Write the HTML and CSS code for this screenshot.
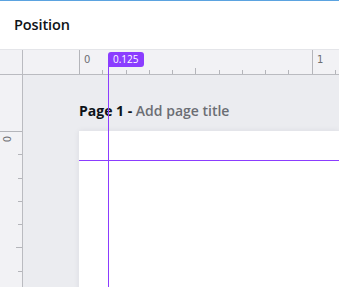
FILE: index.html
```html
<!DOCTYPE html>
<html>
<head>
	<meta charset="UTF-8">
	<title>Position</title>
	<link rel="stylesheet" href="styles.css">
</head>
<body>
	<div class="app">
		<div class="header">
			<h1 class="title">Position</h1>
		</div>
		<div class="workspace">
			<div class="corner"></div>
			<div class="hruler">
				<span class="tick major" style="left:56px"></span>
				<span class="num" style="left:61px">0</span>
				<span class="tick" style="left:79px"></span>
				<span class="tick" style="left:103px"></span>
				<span class="tick" style="left:126px"></span>
				<span class="tick" style="left:149px"></span>
				<span class="tick mid" style="left:172px"></span>
				<span class="tick" style="left:196px"></span>
				<span class="tick" style="left:219px"></span>
				<span class="tick" style="left:242px"></span>
				<span class="tick" style="left:265px"></span>
				<span class="tick major" style="left:289px"></span>
				<span class="num" style="left:294px">1</span>
				<span class="tick" style="left:312px"></span>
				<div class="badge" style="left:85px">0.125</div>
			</div>
			<div class="vruler">
				<span class="vtick major" style="top:56px"></span>
				<span class="vnum" style="top:58px">0</span>
				<span class="vtick" style="top:79px"></span>
				<span class="vtick" style="top:103px"></span>
				<span class="vtick" style="top:126px"></span>
				<span class="vtick" style="top:149px"></span>
				<span class="vtick mid" style="top:172px"></span>
				<span class="vtick" style="top:196px"></span>
			</div>
			<div class="canvas">
				<div class="page-title"><b>Page 1 -</b> Add page title</div>
				<div class="page"></div>
				<div class="guide-v"></div>
				<div class="guide-h"></div>
			</div>
		</div>
	</div>
</body>
</html>
```

FILE: styles.css
```css
*{
	padding: 0;
	margin: 0;
	box-sizing: border-box;
}
body{
	width: 339px;
	height: 287px;
	overflow: hidden;
	background: #fff;
	font-family: "Open Sans", "Noto Sans", sans-serif;
}
.app{
	display: flex;
	flex-direction: column;
	height: 287px;
}
.header{
	height: 50px;
	border-top: 1px solid #5ba3e0;
	border-bottom: 1px solid #e4e5e9;
	padding: 14px 0 0 14px;
	flex-shrink: 0;
}
.title{
	font-size: 14.5px;
	font-weight: 600;
	color: #0e1318;
	line-height: 20px;
	letter-spacing: -0.1px;
}
.workspace{
	flex: 1;
	display: grid;
	grid-template-columns: 23px 1fr;
	grid-template-rows: 25px 1fr;
	min-height: 0;
}
.corner{
	background: #f2f2f5;
	border-right: 1px solid #babbc0;
	border-bottom: 1px solid #babbc0;
}
.hruler{
	background: #f2f2f5;
	border-bottom: 1px solid #babbc0;
	position: relative;
}
.vruler{
	background: #f2f2f5;
	border-right: 1px solid #babbc0;
	position: relative;
}
.tick{
	position: absolute;
	bottom: 0;
	width: 1px;
	height: 4px;
	background: #b4b5ba;
}
.tick.mid{
	height: 6px;
}
.tick.major{
	height: 24px;
}
.num{
	position: absolute;
	top: 4px;
	font-size: 10px;
	color: #6d6e73;
	font-family: "DejaVu Sans", sans-serif;
}
.vtick{
	position: absolute;
	right: 0;
	height: 1px;
	width: 4px;
	background: #b4b5ba;
}
.vtick.mid{
	width: 6px;
}
.vtick.major{
	width: 22px;
}
.vnum{
	position: absolute;
	left: 5px;
	font-size: 10px;
	line-height: 12px;
	color: #6d6e73;
	font-family: "DejaVu Sans", sans-serif;
	transform: rotate(-90deg);
}
.badge{
	position: absolute;
	top: 2px;
	height: 15px;
	padding: 0 5px;
	background: #8b3dff;
	color: #fff;
	font-size: 10px;
	line-height: 15px;
	border-radius: 3px 3px 3px 0;
	font-family: "Open Sans", sans-serif;
}
.badge:after{
	content: "";
	position: absolute;
	left: 0;
	top: 15px;
	width: 1px;
	height: 8px;
	background: #8b3dff;
}
.canvas{
	background: #ebecf0;
	padding: 26px 0 0 56px;
	position: relative;
	overflow: hidden;
}
.page-title{
	font-size: 14px;
	font-weight: 600;
	color: #6b6e74;
	line-height: 20px;
	height: 30px;
}
.page-title b{
	font-weight: 700;
	color: #0e1318;
}
.page{
	background: #fff;
	height: 200px;
	box-shadow: 0 0 6px rgba(40, 44, 60, 0.08);
}
.guide-v{
	position: absolute;
	left: 85px;
	top: 0;
	bottom: 0;
	width: 1px;
	background: #8b3dff;
}
.guide-h{
	position: absolute;
	left: 56px;
	right: 0;
	top: 85px;
	height: 1px;
	background: #8b3dff;
}
```
